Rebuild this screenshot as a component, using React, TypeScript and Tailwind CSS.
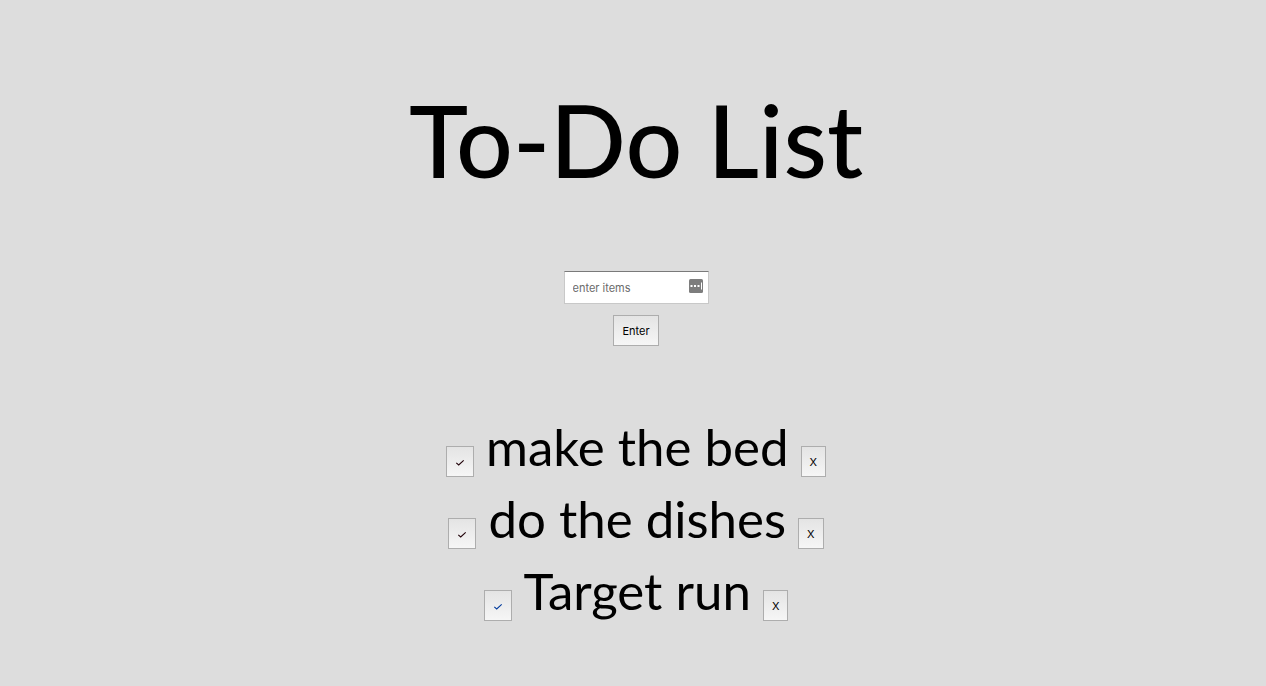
import { useState, type FormEvent } from "react";

type Item = { id: number; text: string; done: boolean; tick: string };

const initialItems: Item[] = [
  { id: 1, text: "make the bed", done: false, tick: "text-[#200008]" },
  { id: 2, text: "do the dishes", done: false, tick: "text-[#200008]" },
  { id: 3, text: "Target run", done: false, tick: "text-[#003a9c]" },
];

const buttonStyle =
  "h-[31px] shrink-0 border border-[#adadad] bg-linear-to-b from-[#e4e4e4] to-[#f6f6f6] px-2 text-[11px] leading-4";

function CheckIcon() {
  return (
    <svg viewBox="0 0 10 8" className="inline-block h-2 w-2.5" fill="none" stroke="currentColor" strokeWidth="1.1" aria-hidden="true">
      <path d="M1.3 3.8 3.7 5.9 8.7 1.3" />
    </svg>
  );
}

function PasswordIcon() {
  return (
    <svg viewBox="0 0 14 14" className="pointer-events-none absolute right-1.5 top-2 size-3.5" aria-hidden="true">
      <rect width="14" height="14" rx="1.5" fill="#7d7d7d" />
      <path d="M1.5 6h2v2h-2zM5 6h2v2H5zM8.5 6h2v2h-2zM12 3.5h1v7h-1z" fill="#fff" />
    </svg>
  );
}

export default function App() {
  const [items, setItems] = useState<Item[]>(initialItems);
  const [draft, setDraft] = useState("");

  const addItem = (event: FormEvent) => {
    event.preventDefault();
    const text = draft.trim();
    if (!text) return;
    setItems([...items, { id: Date.now(), text, done: false, tick: "text-[#200008]" }]);
    setDraft("");
  };

  const toggle = (id: number) =>
    setItems(items.map((item) => (item.id === id ? { ...item, done: !item.done } : item)));

  return (
    <main className="flex min-h-screen flex-col items-center bg-[#dddddd] pl-1.5 font-['Inter',sans-serif] text-black">
      <h1 className="pt-[75px] text-center font-['Lato',sans-serif] text-[100px] leading-[128px] font-medium">To-Do List</h1>

      <form onSubmit={addItem} className="flex flex-col items-center gap-[11px] pt-[68px]">
        <div className="relative">
          <input
            type="text"
            aria-label="New item"
            placeholder="enter items"
            value={draft}
            onChange={(event) => setDraft(event.target.value)}
            className="block h-[33px] w-[145px] border border-[#c8c8c8] border-t-[#7a7a7a] bg-white pl-2 pr-6 text-[11px] placeholder:text-[#6b6b6b]"
          />
          <PasswordIcon />
        </div>
        <button type="submit" className={buttonStyle}>
          Enter
        </button>
      </form>

      <ul className="pt-[65px]">
        {items.map((item) => (
          <li key={item.id} className="flex items-baseline justify-center gap-3">
            <button type="button" aria-label={`Complete ${item.text}`} onClick={() => toggle(item.id)} className={`${buttonStyle} pt-0.5 ${item.tick}`}>
              <CheckIcon />
            </button>
            <span className={`font-['Lato',sans-serif] text-[51px] leading-[72px] ${item.done ? "line-through" : ""}`}>{item.text}</span>
            <button
              type="button"
              aria-label={`Delete ${item.text}`}
              onClick={() => setItems(items.filter((other) => other.id !== item.id))}
              className={`${buttonStyle} pt-0.5`}
            >
              X
            </button>
          </li>
        ))}
      </ul>
    </main>
  );
}
